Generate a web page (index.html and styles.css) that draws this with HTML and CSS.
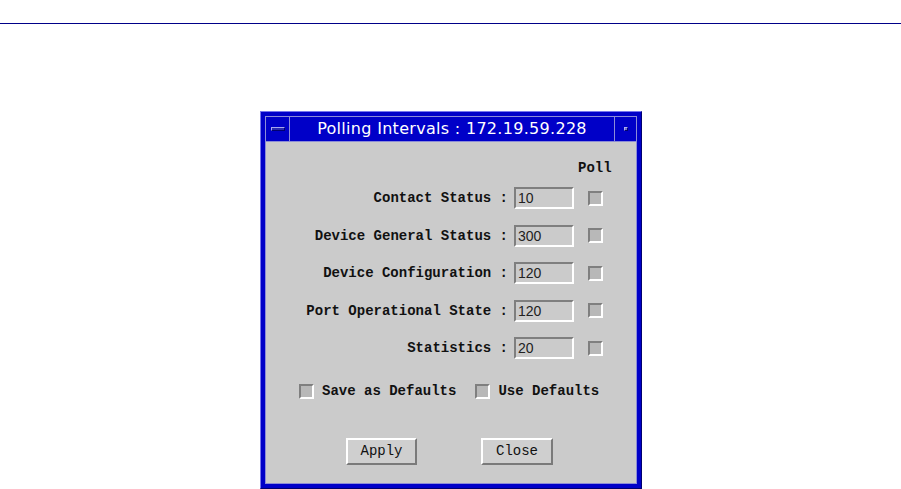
FILE: index.html
```html
<!DOCTYPE html>
<html>
<head>
<meta charset="utf-8">
<link rel="stylesheet" href="styles.css">
</head>
<body>
<div class="topline"></div>
<div class="window">
  <div class="client">
    <div class="titlebar">
      <div class="tb-menu"><span class="minus"></span></div>
      <div class="tb-title">Polling Intervals : 172.19.59.228</div>
      <div class="tb-btn"><span class="dot"></span></div>
    </div>
    <div class="content">
      <div class="poll-head">Poll</div>
      <div class="form">
        <div class="lbl">Contact Status :</div><div class="field">10</div><div class="check"></div>
        <div class="lbl">Device General Status :</div><div class="field">300</div><div class="check"></div>
        <div class="lbl">Device Configuration :</div><div class="field">120</div><div class="check"></div>
        <div class="lbl">Port Operational State :</div><div class="field">120</div><div class="check"></div>
        <div class="lbl">Statistics :</div><div class="field">20</div><div class="check"></div>
      </div>
      <div class="defaults">
        <div class="opt"><span class="check"></span><span class="opt-text">Save as Defaults</span></div>
        <div class="opt"><span class="check"></span><span class="opt-text">Use Defaults</span></div>
      </div>
      <div class="buttons">
        <div class="btn btn-apply">Apply</div>
        <div class="btn btn-close">Close</div>
      </div>
    </div>
  </div>
</div>
</body>
</html>
```
FILE: styles.css
```css
html, body {
  margin: 0;
  padding: 0;
  background: #ffffff;
  overflow: hidden;
}
body {
  width: 901px;
  height: 489px;
}
.topline {
  margin-top: 23px;
  height: 1px;
  background: #000088;
}
.window {
  margin-top: 87px;
  margin-left: 260px;
  width: 372px;
  height: 368px;
  border: 1px solid;
  border-color: #7777ee #000070 #000070 #7777ee;
  padding: 4px;
  background: #0000c8;
}
.client {
  width: 370px;
  height: 366px;
  border: 1px solid #8c8cd8;
  display: flex;
  flex-direction: column;
  background: #cbcbcb;
}
.titlebar {
  height: 24px;
  display: flex;
  background: #0000c8;
  border-bottom: 1px solid #8c8cd8;
}
.tb-menu {
  width: 23px;
  border-right: 1px solid #8c8cd8;
  display: flex;
  align-items: center;
  justify-content: center;
}
.minus {
  width: 12px;
  height: 2px;
  border: 1px solid;
  border-color: #a8a8f0 #000070 #000070 #a8a8f0;
  background: #2a2ab0;
  margin-left: 1px;
}
.tb-title {
  flex: 1;
  display: flex;
  align-items: center;
  justify-content: center;
  color: #ffffff;
  font-family: "DejaVu Sans", sans-serif;
  font-size: 16px;
  letter-spacing: 0.3px;
  line-height: 24px;
  white-space: pre;
}
.tb-btn {
  width: 21px;
  border-left: 1px solid #8c8cd8;
  display: flex;
  align-items: center;
  justify-content: center;
}
.dot {
  width: 2px;
  height: 2px;
  border: 1px solid;
  border-color: #b0b0f0 #000070 #000070 #b0b0f0;
  background: #7070d0;
  margin-bottom: 1px;
}
.content {
  flex: 1;
  padding-top: 18px;
  font-family: "Liberation Mono", "DejaVu Sans Mono", monospace;
  color: #111111;
}
.poll-head {
  padding-left: 312px;
  font-weight: bold;
  font-size: 14px;
  line-height: 16px;
}
.form {
  margin-top: 11px;
  display: grid;
  grid-template-columns: 242px 60px 15px;
  column-gap: 6px;
  row-gap: 15.5px;
  align-items: center;
}
.lbl {
  text-align: right;
  font-weight: bold;
  font-size: 14px;
  line-height: 22px;
  white-space: pre;
}
.field {
  height: 18px;
  border: 2px solid;
  border-color: #7f7f7f #ffffff #ffffff #7f7f7f;
  font-family: "Liberation Sans", Arial, sans-serif;
  font-size: 14px;
  line-height: 18px;
  color: #222222;
  padding-left: 2px;
  box-sizing: content-box;
  width: 54px;
}
.check {
  display: block;
  width: 11px;
  height: 11px;
  border: 2px solid;
  border-color: #7f7f7f #ffffff #ffffff #7f7f7f;
  background: #b8b8b8;
}
.form .check {
  margin-left: 8px;
}
.defaults {
  margin-top: 25px;
  padding-left: 33px;
  display: flex;
  align-items: center;
  height: 15px;
}
.opt {
  display: flex;
  align-items: center;
  margin-right: 19px;
}
.opt-text {
  margin-left: 8px;
  font-weight: bold;
  font-size: 14px;
  line-height: 15px;
  white-space: pre;
}
.buttons {
  margin-top: 39px;
  padding-left: 80px;
  display: flex;
}
.btn {
  height: 23px;
  border: 2px solid;
  border-color: #ffffff #7a7a7a #7a7a7a #ffffff;
  background: #cfcfcf;
  font-size: 14px;
  line-height: 23px;
  text-align: center;
}
.btn-apply {
  width: 67px;
}
.btn-close {
  width: 68px;
  margin-left: 64px;
}
```
